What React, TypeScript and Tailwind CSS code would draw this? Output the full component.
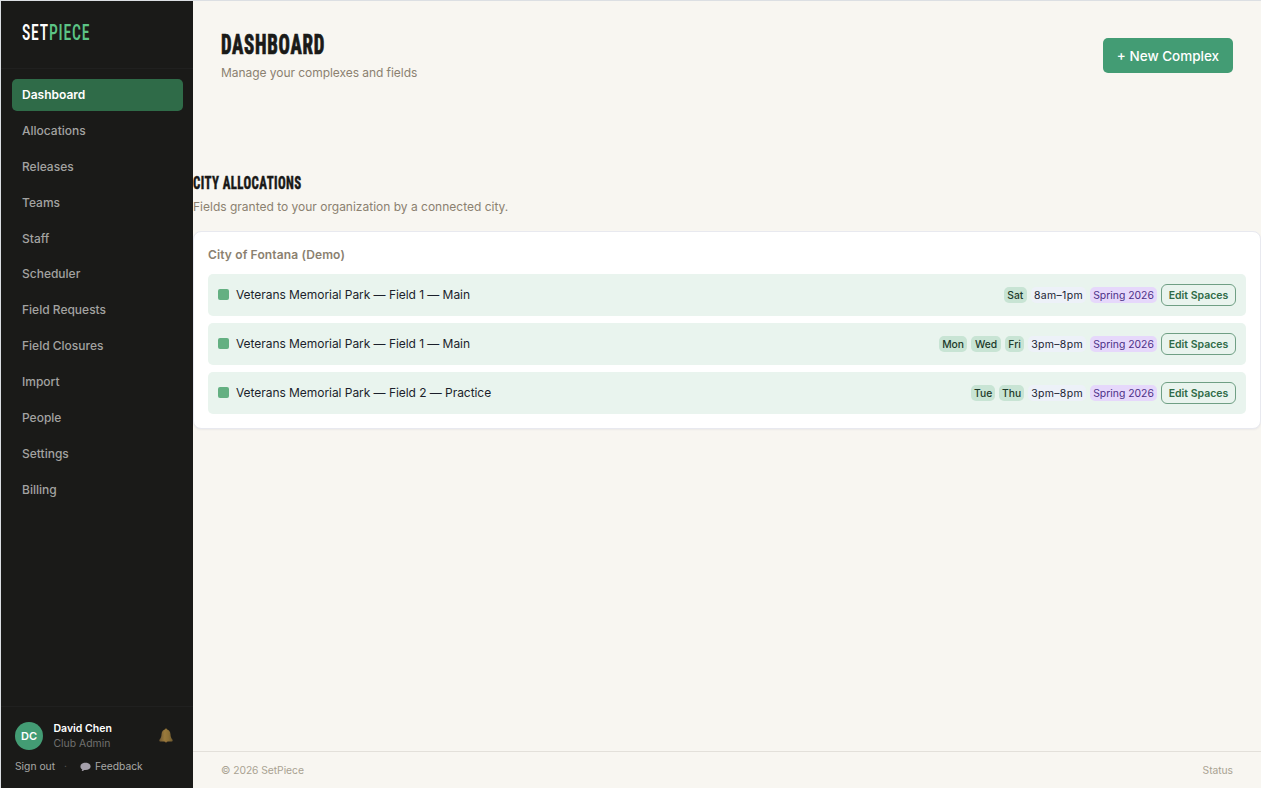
const navItems = [
  "Dashboard",
  "Allocations",
  "Releases",
  "Teams",
  "Staff",
  "Scheduler",
  "Field Requests",
  "Field Closures",
  "Import",
  "People",
  "Settings",
  "Billing",
];

type Allocation = { name: string; days: string[]; time: string };

const allocations: Allocation[] = [
  { name: "Veterans Memorial Park — Field 1 — Main", days: ["Sat"], time: "8am–1pm" },
  { name: "Veterans Memorial Park — Field 1 — Main", days: ["Mon", "Wed", "Fri"], time: "3pm–8pm" },
  { name: "Veterans Memorial Park — Field 2 — Practice", days: ["Tue", "Thu"], time: "3pm–8pm" },
];

const dayWidths: Record<string, string> = {
  Sat: "w-[23px]",
  Mon: "w-[28px]",
  Wed: "w-[30px]",
  Fri: "w-[19px]",
  Tue: "w-[24px]",
  Thu: "w-[25px]",
};

function BellIcon() {
  return (
    <svg className="mb-px" width="14" height="15" viewBox="0 0 14 15">
      <defs>
        <linearGradient id="bell" x1="0" x2="1">
          <stop offset="0" stopColor="#6d5530" />
          <stop offset="0.4" stopColor="#9a7a3c" />
          <stop offset="0.7" stopColor="#8d7036" />
          <stop offset="1" stopColor="#6d592f" />
        </linearGradient>
      </defs>
      <circle cx="7" cy="1.8" r="1.2" fill="#8a6f38" />
      <circle cx="7" cy="13.2" r="1.2" fill="#8a6436" />
      <path d="M7 1.600c-2.800 0-4.300 1.800-4.500 4.600-.1 2.400-.7 4-1.900 5.400-.5.7-.3 1.900.4 1.900h12c.7 0 .9-1.200.4-1.900-1.200-1.400-1.800-3-1.900-5.400C11.300 3.400 9.800 1.600 7 1.600z" fill="url(#bell)" />
    </svg>
  );
}

function SpeechIcon() {
  return (
    <svg width="11" height="10" viewBox="0 0 11 10">
      <path d="M5.500.8C2.600.8.400 2.200.400 4.400c0 1.400.8 2.400 1.900 3-.1.600-.3 1.100-.7 1.500 1.200 0 2-.4 2.600-1l1.300.1c2.900 0 5.100-1.400 5.100-3.600S8.400.8 5.500.8z" fill="#a5a0ab" />
    </svg>
  );
}

function Sidebar() {
  return (
    <aside className="flex w-[192px] shrink-0 flex-col bg-[#1a1a18]">
      <div className="h-[68px] shrink-0 border-b border-[#20201f] pl-[20.500px] pt-[19px]">
        <div className="flex origin-left scale-x-[0.73] font-['Roboto_Condensed','Roboto',sans-serif] text-[21.500px] leading-[26px] font-medium tracking-[1.100px]">
          <span className="text-white">SET</span>
          <span className="text-[#5cc485]">PIECE</span>
        </div>
      </div>
      <nav className="flex flex-1 flex-col gap-[3.9px] pt-[10px] pl-[10.500px] pr-[10px]">
        {navItems.map((item, i) => (
          <a
            key={item}
            className={
              i === 0
                ? "flex h-8 shrink-0 items-center rounded-[5px] bg-[#2f6b48] pl-[10.500px] text-[12px] font-semibold text-white"
                : "flex h-8 shrink-0 items-center rounded-[5px] pl-[10.500px] text-[12px] font-medium text-[#a3a3a1]"
            }
          >
            {item}
          </a>
        ))}
      </nav>
      <div className="h-[82px] shrink-0 border-t border-[#20201f] pt-[14px] pl-[14px] pr-[20px]">
        <div className="flex items-center">
          <div className="flex size-7 items-center justify-center rounded-full bg-[#439c74] text-[11px] font-semibold text-white">
            DC
          </div>
          <div className="ml-[10.500px] flex-1">
            <div className="text-[10.500px] leading-[15px] font-semibold text-white">David Chen</div>
            <div className="text-[10.400px] leading-[15px] text-[#71716f]">Club Admin</div>
          </div>
          <BellIcon />
        </div>
        <div className="mt-[8px] flex h-[16px] items-center text-[10.300px] text-[#a8a8a6]">
          <span className="w-[49px]">Sign out</span>
          <span className="w-[16px] text-[#5b5b59]">·</span>
          <SpeechIcon />
          <span className="ml-[4px]">Feedback</span>
        </div>
      </div>
    </aside>
  );
}

function AllocationRow({ name, days, time }: Allocation) {
  return (
    <div className="flex h-[42px] items-center rounded-[5px] bg-[#e9f4ee] px-[10px]">
      <span className="mb-px ml-[0.400px] size-[11px] rounded-[2px] bg-[#64b082]" />
      <span className="ml-[6.600px] flex-1 text-[12px] tracking-[-0.05px] text-[#1b1f2b]">{name}</span>
      <div className="flex items-center gap-[4px] text-[10.500px] leading-4">
        {days.map((day) => (
          <span
            key={day}
            className={`${dayWidths[day]} rounded-[5px] bg-[#c8e4d4] text-center text-[10.300px] font-medium text-[#1d3a2a]`}
          >
            {day}
          </span>
        ))}
        <span className="h-4 rounded-[5px] bg-[#edf1f8] px-[3px] leading-[17px] tracking-[0.34px] text-[#1a1d33]">
          {time}
        </span>
        <span className="h-4 w-[67px] rounded-[5px] bg-[#e6d8fb] text-center text-[10.400px] leading-[17px] whitespace-nowrap text-[#4c2f87]">
          Spring 2026
        </span>
        <button className="h-[22px] w-[75px] rounded-[6px] border border-[#6f9f84] pt-px text-[10.500px] font-semibold whitespace-nowrap text-[#2f6b48]">
          Edit Spaces
        </button>
      </div>
    </div>
  );
}

export default function App() {
  return (
    <div className="flex h-screen w-full overflow-hidden border-t border-l border-[#dcdfe3] bg-[#f8f6f1] font-['Inter',sans-serif]">
      <Sidebar />
      <main className="flex min-w-0 flex-1 flex-col">
        <header className="flex h-[172px] shrink-0 items-start justify-between pr-[28px] pl-[28px]">
          <div className="pt-[27px]">
            <h1 className="w-max origin-left scale-x-[0.685] font-['Roboto_Condensed','Roboto',sans-serif] text-[27.500px] leading-[34px] font-extrabold tracking-[1px] text-[#1a1a18] [-webkit-text-stroke:0.700px_#1a1a18]">
              DASHBOARD
            </h1>
            <p className="mt-[2px] text-[12px] leading-[18px] tracking-[-0.05px] text-[#8b8170]">
              Manage your complexes and fields
            </p>
          </div>
          <button className="mt-[37px] h-[35px] w-[130px] rounded-[5px] bg-[#439c74] pt-px text-[13.500px] font-medium text-white">
            + New Complex
          </button>
        </header>
        <section>
          <h2 className="w-max origin-left scale-x-[0.69] font-['Roboto_Condensed','Roboto',sans-serif] text-[18.500px] leading-[20px] font-extrabold tracking-[0.600px] text-[#1a1a18] [-webkit-text-stroke:0.400px_#1a1a18]">
            CITY ALLOCATIONS
          </h2>
          <p className="mt-[5px] text-[12px] leading-[18px] text-[#8b8170]">
            Fields granted to your organization by a connected city.
          </p>
          <div className="mt-[15px] h-[198px] rounded-[8px] border border-[#e8e9ef] bg-white px-[14px] pt-[14px] shadow-[0_1px_2px_rgba(40,40,80,0.06)]">
            <h3 className="text-[12px] leading-[18px] font-semibold tracking-[0.13px] text-[#8b8170]">
              City of Fontana (Demo)
            </h3>
            <div className="mt-[10px] flex flex-col gap-[7px]">
              {allocations.map((a, i) => (
                <AllocationRow key={i} {...a} />
              ))}
            </div>
          </div>
        </section>
        <footer className="mt-auto flex h-[37px] items-center justify-between border-t border-[#e3e0da] px-[28px] pt-px text-[10.300px] tracking-[-0.05px] text-[#a9a292]">
          <span>© 2026 SetPiece</span>
          <span>Status</span>
        </footer>
      </main>
    </div>
  );
}
